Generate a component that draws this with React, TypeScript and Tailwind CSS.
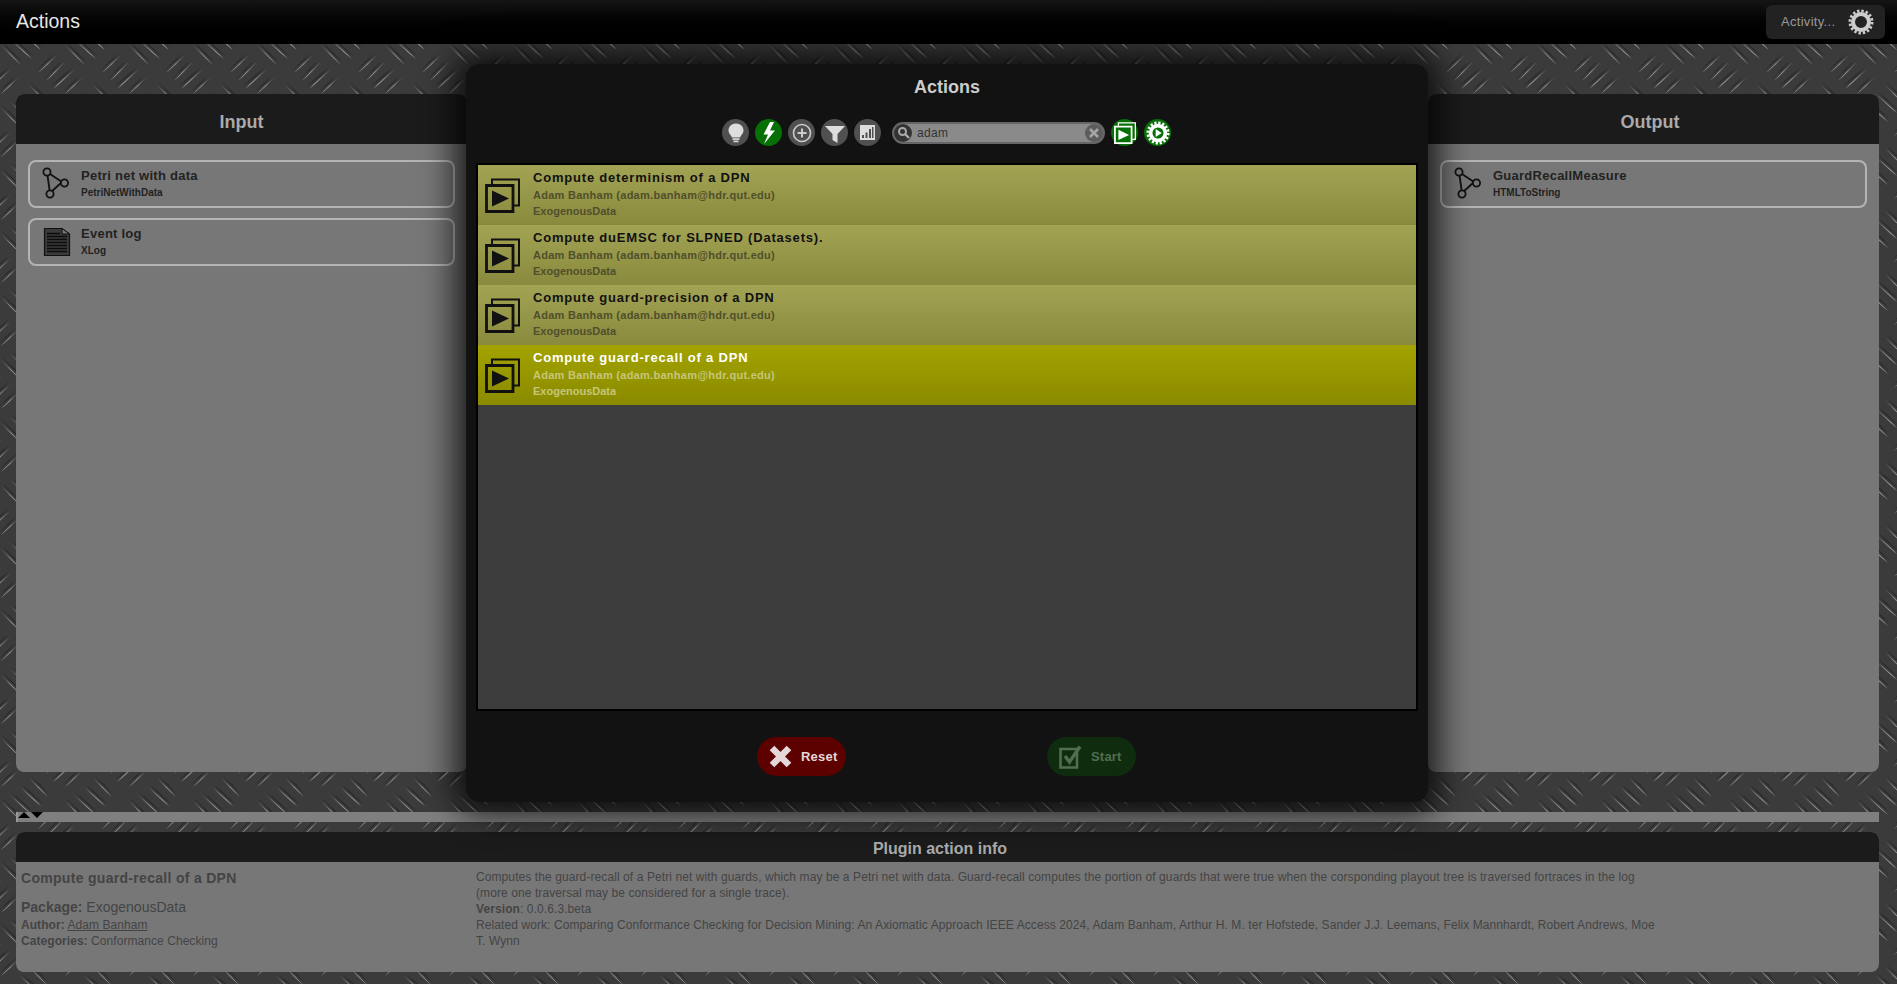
import type { ReactNode } from "react";

const arial = "font-['Liberation_Sans',Arial,sans-serif]";

// plate streaks, in tile coordinates
const forward = [
  [38, 29, 58, 10],
  [46, 37, 66, 17],
  [53, 45, 75, 25],
  [65, 50, 83, 33],
];
const backward = [
  [0, 0, 21, 21],
  [10, -5, 32, 15],
  [19, -14, 41, 6],
  [28, -23, 48, -3],
];

function Streak({ line, ox, oy, back }: { line: number[]; ox: number; oy: number; back?: boolean }) {
  const x1 = line[0] + ox;
  const y1 = line[1] + oy;
  const x2 = line[2] + ox;
  const y2 = line[3] + oy;
  const mx = (x1 + x2) / 2;
  const my = (y1 + y2) / 2;
  const dx = x2 - x1;
  const dy = y2 - y1;
  const len = Math.hypot(dx, dy);
  const nx = (-dy / len) * 1.1;
  const ny = (dx / len) * 1.1;
  const lens = (sx: number, sy: number) =>
    `M${x1 + sx} ${y1 + sy}Q${mx + nx + sx} ${my + ny + sy} ${x2 + sx} ${y2 + sy}Q${mx - nx + sx} ${my - ny + sy} ${x1 + sx} ${y1 + sy}Z`;
  return (
    <>
      <path d={back ? lens(2, -2) : lens(-2, -2)} fill="#161616" opacity="0.6" />
      <path d={lens(0, 0)} fill={back ? "url(#streakBack)" : "url(#streak)"} />
    </>
  );
}

function PlateBackground() {
  const tile: ReactNode[] = [];
  [-64, 0, 64].forEach((ox) =>
    [-63, 0, 63].forEach((oy) => {
      forward.forEach((line, i) => tile.push(<Streak key={`f${ox}${oy}${i}`} line={line} ox={ox} oy={oy} />));
      backward.forEach((line, i) => tile.push(<Streak key={`b${ox}${oy}${i}`} line={line} ox={ox} oy={oy} back />));
    })
  );
  return (
    <svg className="absolute inset-0 h-full w-full" aria-hidden="true">
      <defs>
        <linearGradient id="streak" x1="0" y1="1" x2="1" y2="0">
          <stop offset="0" stopColor="#c4c4c4" />
          <stop offset="0.55" stopColor="#808080" />
          <stop offset="1" stopColor="#4c4c4c" />
        </linearGradient>
        <linearGradient id="streakBack" x1="1" y1="1" x2="0" y2="0">
          <stop offset="0" stopColor="#c4c4c4" />
          <stop offset="0.55" stopColor="#808080" />
          <stop offset="1" stopColor="#4c4c4c" />
        </linearGradient>
        <pattern id="plate" width="64" height="63" patternUnits="userSpaceOnUse" y="44">
          <rect width="64" height="63" fill="#3b3b3b" />
          {tile}
        </pattern>
      </defs>
      <rect width="100%" height="100%" fill="url(#plate)" />
    </svg>
  );
}

function PetriIcon() {
  return (
    <svg width="30" height="34" viewBox="0 0 30 34" fill="none" stroke="#111" strokeWidth="1.8" className="-ml-[1px] shrink-0">
      <line x1="6" y1="5" x2="21" y2="15" />
      <line x1="6" y1="5" x2="9" y2="26" />
      <line x1="21" y1="15" x2="9" y2="26" />
      <circle cx="6" cy="5" r="3.6" fill="#777" />
      <circle cx="23.5" cy="16" r="3.6" fill="#777" />
      <circle cx="9" cy="27" r="3.6" fill="#777" />
    </svg>
  );
}

function DocIcon() {
  return (
    <svg width="30" height="30" viewBox="0 0 30 30" className="shrink-0">
      <path d="M2.5 1.5H20L27.5 7V28.5H2.5Z" fill="#3a3a3a" stroke="#111" strokeWidth="1.2" />
      <path d="M20 1.5V7H27.5Z" fill="#777" stroke="#111" strokeWidth="1" />
      {[6, 9, 12, 15, 18, 21, 24].map((y) => (
        <line key={y} x1="5" x2={y === 6 ? 18 : 25} y1={y + 0.5} y2={y + 0.5} stroke="#0c0c0c" strokeWidth="1.6" />
      ))}
    </svg>
  );
}

function PlayStack({ color, size, fill }: { color: string; size: number; fill: string }) {
  return (
    <svg width={size} height={size} viewBox="0 0 35 35" className="shrink-0">
      <path d="M7 6V1.5H34V27.5H29" fill="none" stroke={color} strokeWidth="2" />
      <path d="M1.5 7.5H28V33.5H1.5Z" fill={fill} stroke={color} strokeWidth="2.8" />
      <path d="M7 12.5L24 20.5L7 28.5Z" fill={color} />
    </svg>
  );
}

function Gear({ size, color, inner }: { size: number; color: string; inner?: ReactNode }) {
  return (
    <svg width={size} height={size} viewBox="0 0 26 26" fill="none">
      <circle cx="13" cy="13" r="11" stroke={color} strokeWidth="3" strokeDasharray="2.4 1.92" />
      <circle cx="13" cy="13" r="8" stroke={color} strokeWidth="4" />
      {inner}
    </svg>
  );
}

function RoundButton({ green, children }: { green?: boolean; children: ReactNode }) {
  return (
    <div
      className={`flex h-[27px] w-[27px] shrink-0 items-center justify-center rounded-full ${green ? "bg-[#067006]" : "bg-[#505050]"}`}
    >
      {children}
    </div>
  );
}

function IoCard({ icon, title, type }: { icon: ReactNode; title: string; type: string }) {
  return (
    <div className="flex h-[48px] items-center rounded-[8px] border-2 border-[#b4b4b4] pl-[12px]">
      <div className="flex w-[39px] shrink-0 items-center">{icon}</div>
      <div className="-mt-[2px] flex flex-col">
        <div className="text-[13px] leading-[17px] font-bold tracking-[0.25px] text-[#222]">{title}</div>
        <div className="mt-[2px] text-[10px] leading-[13px] font-bold text-[#222]">{type}</div>
      </div>
    </div>
  );
}

function SidePanel({ title, shift, children }: { title: string; shift?: boolean; children: ReactNode }) {
  return (
    <div className="flex h-full w-[451px] flex-col overflow-hidden rounded-[8px] bg-[#777]">
      <div
        className={`flex h-[50px] shrink-0 items-center justify-center bg-[#1b1b1b] pt-[6px] text-[18px] font-bold text-[#aaa] ${shift ? "pr-[7px]" : ""}`}
      >
        {title}
      </div>
      <div className="flex flex-col gap-[10px] px-[12px] pt-[16px]">{children}</div>
    </div>
  );
}

function ActionRow({ title, selected }: { title: string; selected?: boolean }) {
  return (
    <div
      className={`flex h-[60px] items-center pl-[7px] ${
        selected
          ? "bg-gradient-to-b from-[#a3a300] to-[#8a8a00]"
          : "bg-gradient-to-b from-[#a3a354] to-[#8a8a3e]"
      }`}
    >
      <div className="w-[48px] shrink-0">
        <PlayStack size={35} color="#111" fill="none" />
      </div>
      <div className="-mt-[1px] flex flex-col">
        <div className={`text-[13px] leading-[16px] font-bold tracking-[0.8px] ${selected ? "text-white" : "text-[#111]"}`}>
          {title}
        </div>
        <div
          className={`mt-[1px] text-[11px] leading-[16px] font-bold tracking-[0.27px] ${selected ? "text-[#c6c67a]" : "text-[#4f4f2b]"}`}
        >
          Adam Banham (adam.banham@hdr.qut.edu)
        </div>
        <div className={`text-[11px] leading-[16px] font-bold ${selected ? "text-[#c6c67a]" : "text-[#4f4f2b]"}`}>
          ExogenousData
        </div>
      </div>
    </div>
  );
}

export default function App() {
  return (
    <div className={`relative h-screen w-full overflow-hidden ${arial}`}>
      <PlateBackground />

      <div className="relative flex h-full flex-col">
        <header className="flex h-[44px] shrink-0 items-center justify-between bg-gradient-to-b from-[#151515] to-black pr-[12px] pl-[16px]">
          <h1 className="text-[19.5px] text-[#e6e6e6]">Actions</h1>
          <div className="flex h-[34px] w-[119px] items-center rounded-[6px] bg-[#222] pl-[15px]">
            <span className="w-[67px] text-[13px] tracking-[0.3px] text-[#999]">Activity...</span>
            <Gear size={26} color="#ccc" />
          </div>
        </header>

        <div className="flex-1 px-[16px] pt-[50px] pr-[18px]">
          <div className="flex h-[678px] justify-between">
            <SidePanel title="Input">
              <IoCard icon={<PetriIcon />} title="Petri net with data" type="PetriNetWithData" />
              <IoCard icon={<DocIcon />} title="Event log" type="XLog" />
            </SidePanel>
            <SidePanel title="Output" shift>
              <IoCard icon={<PetriIcon />} title="GuardRecallMeasure" type="HTMLToString" />
            </SidePanel>
          </div>

          <div className="mt-[40px] flex h-[10px] gap-[1px] border-l-2 border-l-[#999] bg-[#7f7f7f]">
            <div className="h-0 w-0 border-x-[6px] border-b-[6px] border-x-transparent border-b-black" />
            <div className="h-0 w-0 border-x-[6px] border-t-[6px] border-x-transparent border-t-black" />
          </div>

          <section className="mt-[10px] h-[140px] overflow-hidden rounded-[8px] bg-[#777]">
            <div className="flex h-[30px] items-center justify-center bg-[#1b1b1b] pt-[3px] pr-[15px] text-[16px] font-bold text-[#aaa]">
              Plugin action info
            </div>
            <div className="flex pt-[7px] text-[#444]">
              <div className="w-[460px] shrink-0 pl-[5px]">
                <div className="-mt-[1px] text-[14px] leading-[20px] font-bold tracking-[0.3px]">
                  Compute guard-recall of a DPN
                </div>
                <div className="mt-[9px] text-[14px] leading-[20px]">
                  <b>Package:</b> ExogenousData
                </div>
                <div className="text-[12px] leading-[16px] tracking-[0.06px]">
                  <b>Author:</b> <span className="underline">Adam Banham</span>
                </div>
                <div className="text-[12px] leading-[16px] tracking-[0.06px]">
                  <b>Categories:</b> Conformance Checking
                </div>
              </div>
              <div className="w-[1186px] text-[12px] leading-[16px] tracking-[0.09px]">
                <div>
                  Computes the guard-recall of a Petri net with guards, which may be a Petri net with data. Guard-recall
                  computes the portion of guards that were true when the corsponding playout tree is traversed fortraces in
                  the log (more one traversal may be considered for a single trace).
                </div>
                <div>
                  <b>Version</b>: 0.0.6.3.beta
                </div>
                <div>
                  Related work: Comparing Conformance Checking for Decision Mining: An Axiomatic Approach IEEE Access 2024,
                  Adam Banham, Arthur H. M. ter Hofstede, Sander J.J. Leemans, Felix Mannhardt, Robert Andrews, Moe T. Wynn
                </div>
              </div>
            </div>
          </section>
        </div>
      </div>

      {/* dialog on top of the panels */}
      <div className="absolute top-[64px] left-[466px] flex h-[738px] w-[962px] flex-col rounded-[14px] bg-[#121212] px-[10px] shadow-[0_0_32px_12px_rgba(0,0,0,0.75)]">
        <h2 className="pt-[12px] text-center text-[18px] leading-[22px] font-bold text-[#ccc]">Actions</h2>

        <div className="mt-[21px] flex h-[27px] items-center pl-[246px]">
          <div className="flex gap-[6px]">
            <RoundButton>
              <svg width="18" height="20" viewBox="0 0 18 20" fill="#ddd">
                <path d="M9 0.5C4.6 0.5 1.5 3.6 1.5 7.4C1.5 10.2 3.6 11.6 5 14.4H13C14.4 11.6 16.5 10.2 16.5 7.4C16.5 3.6 13.4 0.5 9 0.5Z" />
                <rect x="5.5" y="15.3" width="7" height="1.6" />
                <rect x="6.5" y="17.6" width="5" height="1.6" />
              </svg>
            </RoundButton>
            <RoundButton green>
              <svg width="14" height="22" viewBox="0 0 14 22" fill="#fff">
                <path d="M8 0L1.5 12.5H6L2 22L13 8.5H8L12 0Z" />
              </svg>
            </RoundButton>
            <RoundButton>
              <svg width="20" height="20" viewBox="0 0 20 20" fill="none" stroke="#ccc">
                <circle cx="10" cy="10" r="8.5" strokeWidth="1.6" />
                <path d="M10 5.5V14.5M5.5 10H14.5" strokeWidth="2" />
              </svg>
            </RoundButton>
            <RoundButton>
              <svg width="20" height="18" viewBox="0 0 20 18" fill="#ddd" className="mt-[3px]">
                <path d="M0 1H20L12.5 9V18L7.5 15V9Z" />
              </svg>
            </RoundButton>
            <RoundButton>
              <svg width="15" height="15" viewBox="0 0 15 15">
                <rect width="15" height="15" fill="#ddd" />
                <path d="M2 13V10H4V13ZM5.5 13V7.5H7.5V13ZM9 13V4H11V13ZM12 13V2H13.5V13Z" fill="#505050" />
              </svg>
            </RoundButton>
          </div>

          <div className="ml-[11px] flex h-[22px] w-[213px] items-center rounded-full border-2 border-[#666] bg-[#8a8a8a]">
            <div className="flex h-[18px] w-[18px] shrink-0 items-center justify-center rounded-full bg-[#333]">
              <svg width="13" height="13" viewBox="0 0 13 13" fill="none" stroke="#aaa">
                <circle cx="5.5" cy="5.5" r="3.5" strokeWidth="2" />
                <path d="M8 8L12 12" strokeWidth="2.4" />
              </svg>
            </div>
            <span className="ml-[5px] flex-1 text-[12px] tracking-[0.3px] text-[#333]">adam</span>
            <div className="flex h-[18px] w-[18px] shrink-0 items-center justify-center rounded-full bg-[#5c5c5c]">
              <svg width="10" height="10" viewBox="0 0 10 10" stroke="#a5a5a5" strokeWidth="2.6">
                <path d="M1 1L9 9M9 1L1 9" />
              </svg>
            </div>
          </div>

          <div className="ml-[6px] flex gap-[6px]">
            <RoundButton green>
              <PlayStack size={22} color="#fff" fill="none" />
            </RoundButton>
            <RoundButton green>
              <Gear size={24} color="#fff" inner={<path d="M10.5 8.8L17 13L10.5 17.2Z" fill="#fff" />} />
            </RoundButton>
          </div>
        </div>

        <div className="mt-[17px] h-[548px] shrink-0 border-2 border-black bg-[#3c3c3c]">
          <ActionRow title="Compute determinism of a DPN" />
          <ActionRow title="Compute duEMSC for SLPNED (Datasets)." />
          <ActionRow title="Compute guard-precision of a DPN" />
          <ActionRow title="Compute guard-recall of a DPN" selected />
        </div>

        <div className="mt-[26px] flex pl-[281px]">
          <button className="flex h-[39px] w-[89px] items-center rounded-full bg-[#5c0000] pl-[12px]">
            <svg width="23" height="23" viewBox="0 0 23 23" stroke="#e4d8d8" strokeWidth="6.5">
              <path d="M3 3L20 20M20 3L3 20" />
            </svg>
            <span className="ml-[9px] text-[13px] font-bold tracking-[0.2px] text-[#e4d8d8]">Reset</span>
          </button>
          <button className="ml-[201px] flex h-[39px] w-[89px] items-center rounded-full bg-[#0f2c0f] pl-[12px]">
            <svg width="24" height="24" viewBox="0 0 24 24" fill="none" stroke="#4f6f4f">
              <path d="M1.5 4H18V22.5H1.5Z" strokeWidth="2.6" />
              <path d="M6 11L10.5 17L21 1.5" strokeWidth="3.4" />
            </svg>
            <span className="ml-[8px] text-[13px] font-bold tracking-[0.2px] text-[#4f6f4f]">Start</span>
          </button>
        </div>
      </div>
    </div>
  );
}
